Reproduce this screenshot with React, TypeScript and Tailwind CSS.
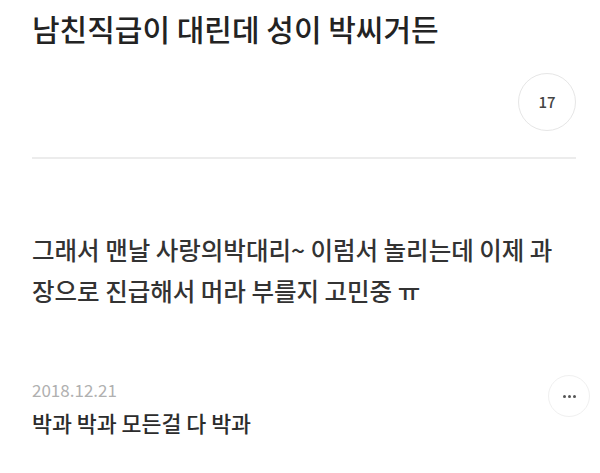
import React from "react";

export default function App() {
  const font = { fontFamily: '"Noto Sans CJK KR", "Noto Sans", sans-serif' };
  return (
    <div
      className="w-[600px] h-[473px] bg-white overflow-hidden pl-[32px] pr-[24px] flex flex-col"
      style={font}
    >
      <h1 className="mt-[10px] text-[30px] leading-[36px] font-medium text-[#232323] whitespace-nowrap">
        남친직급이 대린데 성이 박씨거든
      </h1>
      <div className="mt-[27px] flex justify-end">
        <div className="w-[58px] h-[58px] rounded-full border border-[#e6e6e6] flex items-center justify-center text-[15px] font-medium text-[#444]">
          17
        </div>
      </div>
      <div className="mt-[26px] h-[2px] bg-[#ececec]" />
      <p className="mt-[70px] text-[24.5px] leading-[41px] text-[#333] font-medium whitespace-nowrap">
        그래서 맨날 사랑의박대리~ 이럼서 놀리는데 이제 과
        <br />
        장으로 진급해서 머라 부를지 고민중 ㅠ
      </p>
      <div className="mt-[69px] flex items-start justify-between">
        <div className="flex flex-col">
          <div className="text-[17px] leading-[20px] text-[#b0b0b0]">2018.12.21</div>
          <div className="mt-[9px] text-[21.7px] leading-[28px] font-medium text-[#2c2c2c] whitespace-nowrap">
            박과 박과 모든걸 다 박과
          </div>
        </div>
        <div className="mt-[-5px] mr-[-14px] w-[42px] h-[42px] rounded-full border border-[#f0f0f0] flex items-center justify-center gap-[2px]">
          <span className="w-[3px] h-[3px] rounded-full bg-[#555]" />
          <span className="w-[3px] h-[3px] rounded-full bg-[#555]" />
          <span className="w-[3px] h-[3px] rounded-full bg-[#555]" />
        </div>
      </div>
    </div>
  );
}
